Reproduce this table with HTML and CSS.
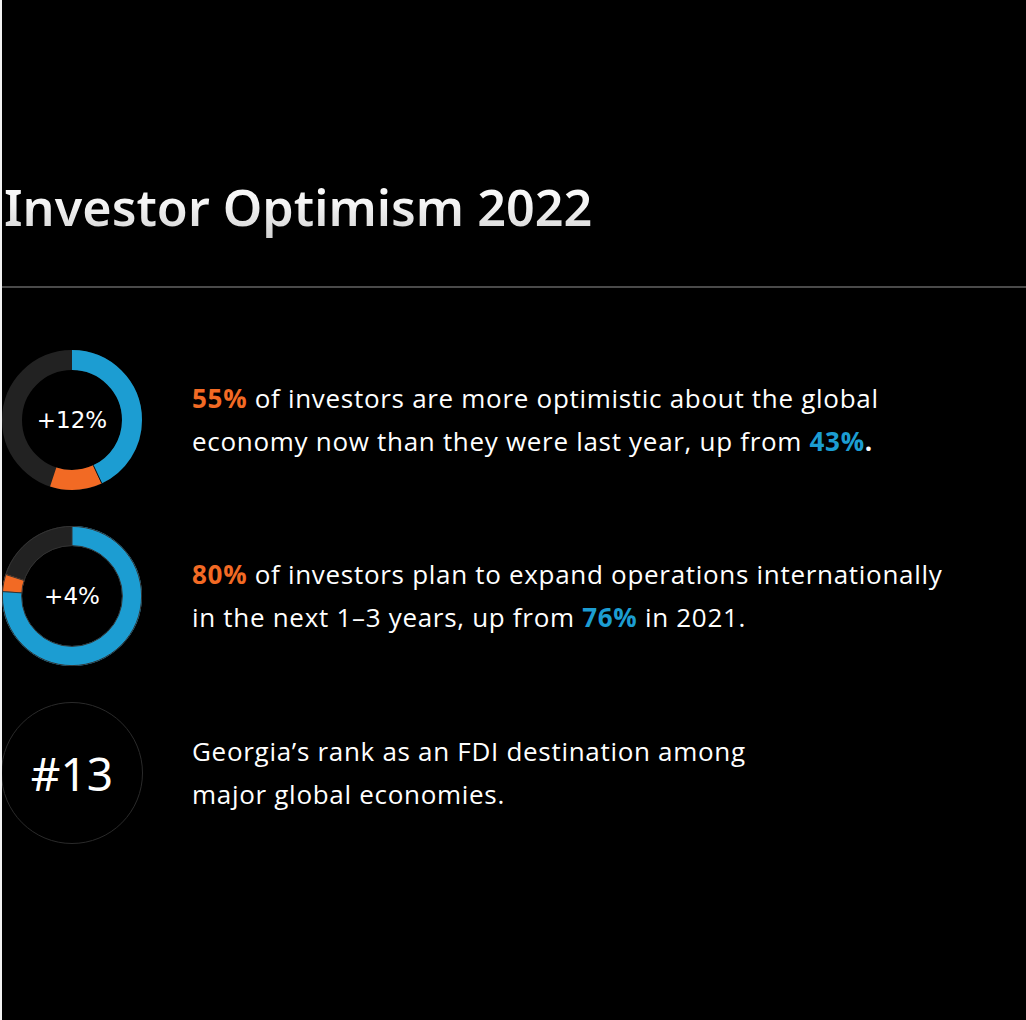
FILE: index.html
```html
<!DOCTYPE html>
<html lang="en">
<head>
<meta charset="utf-8">
<title>Investor Optimism 2022</title>
<link rel="stylesheet" href="styles.css">
</head>
<body>
<main class="page">
  <header class="head">
    <h1 class="title">Investor Optimism 2022</h1>
  </header>
  <hr class="divider">
  <section class="stats">
    <div class="stat">
      <div class="chart">
        <svg class="ring" viewBox="0 0 140 140" width="140" height="140">
          <g transform="rotate(-90 70 70)">
            <circle cx="70" cy="70" r="60" fill="none" stroke="#222222" stroke-width="20"/>
            <circle cx="70" cy="70" r="60" fill="none" stroke="#1c9dd2" stroke-width="20" stroke-dasharray="162.1 376.99"/>
            <circle cx="70" cy="70" r="60" fill="none" stroke="#f26a24" stroke-width="20" stroke-dasharray="45.24 376.99" stroke-dashoffset="-162.1"/>
          </g>
          <line x1="91.3" y1="115.3" x2="99.8" y2="133.4" stroke="#111" stroke-width="1"/>
        </svg>
        <span class="chart-label">+12%</span>
      </div>
      <p class="stat-text"><b class="orange">55%</b> of investors are more optimistic about the global economy now than they were last year, up from <b class="blue">43%</b><b>.</b></p>
    </div>
    <div class="stat">
      <div class="chart">
        <svg class="ring" viewBox="0 0 140 140" width="140" height="140">
          <g transform="rotate(-90 70 70)">
            <circle cx="70" cy="70" r="60" fill="none" stroke="#222222" stroke-width="20"/>
            <circle cx="70" cy="70" r="60" fill="none" stroke="#1c9dd2" stroke-width="20" stroke-dasharray="286.5 376.99"/>
            <circle cx="70" cy="70" r="60" fill="none" stroke="#f26a24" stroke-width="20" stroke-dasharray="15.08 376.99" stroke-dashoffset="-286.5"/>
          </g>
          <circle cx="70" cy="70" r="69.6" fill="none" stroke="#333" stroke-width="1"/>
          <circle cx="70" cy="70" r="50.4" fill="none" stroke="#333" stroke-width="1"/>
          <line x1="70" y1="0" x2="70" y2="20" stroke="#333" stroke-width="1"/>
          <line x1="0.2" y1="65.6" x2="20.1" y2="66.9" stroke="#333" stroke-width="1"/>
          <line x1="3.4" y1="48.4" x2="22.5" y2="54.6" stroke="#333" stroke-width="1"/>
        </svg>
        <span class="chart-label">+4%</span>
      </div>
      <p class="stat-text"><b class="orange">80%</b> of investors plan to expand operations internationally in the next 1–3 years, up from <b class="blue">76%</b> in 2021.</p>
    </div>
    <div class="stat">
      <div class="chart chart-plain">
        <span class="rank">#13</span>
      </div>
      <p class="stat-text">Georgia’s rank as an FDI destination among<br>major global economies.</p>
    </div>
  </section>
</main>
</body>
</html>
```
FILE: styles.css
```css
html, body {
  margin: 0;
  padding: 0;
  background: #f2f2f2;
}

.page {
  margin-left: 2px;
  min-height: 1020px;
  background: #000;
  color: #fff;
  overflow: hidden;
}

.head {
  padding-top: 172px;
  padding-left: 2px;
}

.title {
  margin: 0;
  font-family: "Noto Sans", "Open Sans", sans-serif;
  font-weight: 600;
  font-size: 50.3px;
  line-height: 70px;
  letter-spacing: 0;
  background: linear-gradient(180deg, #ffffff 0%, #f4f4f4 45%, #cfcfcf 100%);
  -webkit-background-clip: text;
  background-clip: text;
  color: transparent;
  display: inline-block;
}

.divider {
  margin: 44px 0 0 0;
  border: 0;
  height: 2px;
  background: #4a4a4a;
}

.stats {
  display: flex;
  flex-direction: column;
  gap: 36px;
  padding-top: 62px;
}

.stat {
  display: flex;
  align-items: center;
  gap: 50px;
}

.chart {
  position: relative;
  flex: 0 0 140px;
  width: 140px;
  height: 140px;
  display: flex;
  align-items: center;
  justify-content: center;
}

.ring {
  position: absolute;
  left: 0;
  top: 0;
}

.chart-plain {
  box-sizing: border-box;
  border: 1.5px solid #2a2a2a;
  border-radius: 50%;
  width: 142px;
  height: 142px;
  flex-basis: 142px;
  margin-left: -1px;
  margin-right: -1px;
}

.chart-label {
  position: relative;
  font-family: "DejaVu Sans", sans-serif;
  font-size: 23px;
  color: #fff;
}

.rank {
  font-family: "Noto Sans", sans-serif;
  font-size: 46px;
  color: #fff;
}

.stat-text {
  margin: 0;
  max-width: 770px;
  font-family: "Open Sans", sans-serif;
  font-size: 26px;
  letter-spacing: 0.7px;
  line-height: 43px;
  color: #fff;
}

.stat-text b {
  font-weight: 700;
}

.orange {
  color: #f26a24;
}

.blue {
  color: #1c9dd2;
}
```
